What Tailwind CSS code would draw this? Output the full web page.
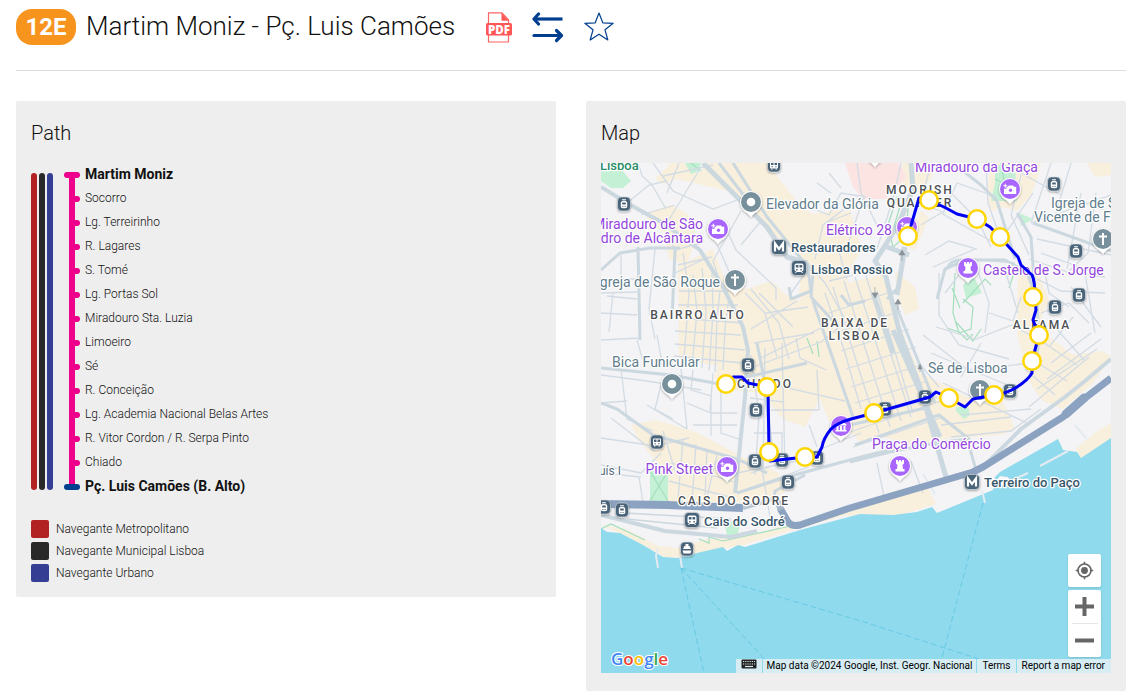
<!DOCTYPE html>
<html lang="en">
<head>
  <meta charset="UTF-8" />
  <meta name="viewport" content="width=device-width, initial-scale=1.0"/>
  <title>12E Martim Moniz - Pç. Luis Camões</title>
  <script src="https://cdn.jsdelivr.net/npm/@tailwindcss/browser@4"></script>
</head>
<body class="bg-white font-['Roboto',sans-serif] font-light text-[#111] pl-4 pr-1">

  <!-- Route header -->
  <header class="flex items-center pt-[9px] pb-[25px] border-b border-[#dcdcdc]">
    <span class="flex items-center justify-center w-[60px] h-9 rounded-2xl bg-[#f7941e] text-white text-2xl font-bold">12E</span>
    <h1 class="ml-[10px] text-[26px] leading-[34px] mb-[2px]">Martim Moniz - Pç. Luis Camões</h1>
    <a href="#pdf" aria-label="PDF" class="ml-[31px]">
      <svg class="w-[26px] h-[31px]" viewBox="0 0 26 31">
        <path d="M2.500 12V.8H16l6.500 7V12M2.500 23v7h20v-7" fill="#fff" stroke="#ff6464" stroke-width="1.200"/>
        <path d="M15.500 .8v8h7z" fill="#ff5757"/>
        <rect x="0" y="11" width="26" height="12.500" rx="1.500" fill="#ff5757"/>
        <text x="13" y="21.500" text-anchor="middle" font-family="Open Sans" font-weight="800" font-size="11.500" fill="#fff">PDF</text>
      </svg>
    </a>
    <a href="#reverse" aria-label="Reverse direction" class="ml-5">
      <svg class="w-8 h-[31px]" viewBox="0 0 32 31" fill="none" stroke="#003f8f" stroke-width="3.200" stroke-linecap="round" stroke-linejoin="round">
        <path d="M30.500 7H3" stroke-linecap="butt"/><path d="M6.500 2 2 7 6.500 12"/>
        <path d="M2 23.500h27"/><path d="M24.500 18.500l5 5-5 5"/>
      </svg>
    </a>
    <a href="#favourite" aria-label="Add to favourites" class="ml-5">
      <svg class="w-[30px] h-[30px]" viewBox="0 0 30 30" fill="none" stroke="#003f8f" stroke-width="1.200" stroke-linejoin="round">
        <path d="M15 1l3.800 9.800 10.400.5-8.200 6.500 2.800 10.200L15 22.200 6.200 28 9 17.800.8 11.300l10.400-.5z"/>
      </svg>
    </a>
  </header>

  <main class="grid grid-cols-2 gap-[30px] items-start mt-[30px]">

    <!-- Path -->
    <section class="bg-[#eee] rounded-xs p-[15px]">
      <h2 class="text-xl leading-[34px] mb-[13px]">Path</h2>
      <div class="flex">
        <div class="flex gap-[2px] mt-[10px] mb-[9px]">
          <span class="w-[6px] rounded-full bg-[#b22222]"></span>
          <span class="w-[6px] rounded-full bg-[#292929]"></span>
          <span class="w-[6px] rounded-full bg-[#343f94]"></span>
        </div>
        <div class="grid ml-[11px] w-4 mt-3 mb-3">
          <div class="col-start-1 row-start-1 w-[6px] ml-[5px] bg-[#ee008c]"></div>
          <div class="col-start-1 row-start-1 flex flex-col justify-between items-end -my-[3px]">
            <i class="w-4 h-[6px] rounded-full bg-[#ee008c]"></i>
            <i class="w-2 h-[6px] rounded-full bg-[#ee008c]"></i>
            <i class="w-2 h-[6px] rounded-full bg-[#ee008c]"></i>
            <i class="w-2 h-[6px] rounded-full bg-[#ee008c]"></i>
            <i class="w-2 h-[6px] rounded-full bg-[#ee008c]"></i>
            <i class="w-2 h-[6px] rounded-full bg-[#ee008c]"></i>
            <i class="w-2 h-[6px] rounded-full bg-[#ee008c]"></i>
            <i class="w-2 h-[6px] rounded-full bg-[#ee008c]"></i>
            <i class="w-2 h-[6px] rounded-full bg-[#ee008c]"></i>
            <i class="w-2 h-[6px] rounded-full bg-[#ee008c]"></i>
            <i class="w-2 h-[6px] rounded-full bg-[#ee008c]"></i>
            <i class="w-2 h-[6px] rounded-full bg-[#ee008c]"></i>
            <i class="w-2 h-[6px] rounded-full bg-[#ee008c]"></i>
            <i class="w-4 h-[6px] rounded-full bg-[#003f8f]"></i>
          </div>
        </div>
        <ol class="ml-[5px] text-xs leading-[22px]">
          <li class="h-6 text-sm leading-[22px] font-bold">Martim Moniz</li>
          <li class="h-6">Socorro</li>
          <li class="h-6">Lg. Terreirinho</li>
          <li class="h-6">R. Lagares</li>
          <li class="h-6">S. Tomé</li>
          <li class="h-6">Lg. Portas Sol</li>
          <li class="h-6">Miradouro Sta. Luzia</li>
          <li class="h-6">Limoeiro</li>
          <li class="h-6">Sé</li>
          <li class="h-6">R. Conceição</li>
          <li class="h-6">Lg. Academia Nacional Belas Artes</li>
          <li class="h-6">R. Vitor Cordon / R. Serpa Pinto</li>
          <li class="h-6">Chiado</li>
          <li class="h-6 text-sm leading-[22px] font-bold">Pç. Luis Camões (B. Alto)</li>
        </ol>
      </div>
      <ul class="flex flex-col gap-1 mt-[21px] text-xs leading-[18px]">
        <li class="flex gap-[7px]"><span class="size-[18px] rounded-xs bg-[#b22222]"></span>Navegante Metropolitano</li>
        <li class="flex gap-[7px]"><span class="size-[18px] rounded-xs bg-[#292929]"></span>Navegante Municipal Lisboa</li>
        <li class="flex gap-[7px]"><span class="size-[18px] rounded-xs bg-[#343f94]"></span>Navegante Urbano</li>
      </ul>
    </section>

    <!-- Map -->
    <section class="bg-[#eee] rounded-xs p-[15px] pb-[18px]">
      <h2 class="text-xl leading-[34px] mb-[13px]">Map</h2>
      <div class="relative aspect-square overflow-hidden">
        <svg class="w-full h-full" viewBox="0 0 510 510" font-family="Roboto, sans-serif">
          <defs>
            <filter id="shadow" x="-30%" y="-30%" width="160%" height="170%"><feDropShadow dx="0" dy="1" stdDeviation="1" flood-opacity=".35"/></filter>
            <g id="box" filter="url(#shadow)"><rect x="-6.500" y="-7" width="13" height="14" rx="4" fill="#4a6479" stroke="#dfe6ea" stroke-width=".6"/></g>
            <g id="tram"><use href="#box"/><path d="M-3.200-1.500Q-3-3.200 0-3.200T3.200-1.500V3Q3 4.200 0 4.200T-3.200 3zM-2-4.800h4v1h-4z" fill="#fff"/><path d="M-1.800-1.600h3.600v2h-3.600zM-1.600 2h1v1h-1zM.6 2h1v1h-1z" fill="#4a6479"/></g>
            <g id="bus"><use href="#box"/><rect x="-4" y="-3.500" width="8" height="7" rx="1" fill="#fff"/><path d="M-3-2.500h2.500V0H-3zM.5-2.500H3V0H.5zM-2.500 1.300h1.300v1h-1.300zM1.200 1.300h1.300v1H1.200z" fill="#4a6479"/><path d="M-3 3.500h1.500v1H-3zM1.500 3.500H3v1H1.500z" fill="#fff"/></g>
            <g id="train"><rect x="-7.500" y="-7.500" width="15" height="15" rx="4" fill="#4a6479" stroke="#dfe6ea" stroke-width=".6" filter="url(#shadow)"/><rect x="-4.500" y="-4.500" width="9" height="8" rx="2" fill="#fff"/><path d="M-3.200-3h2.700v2.500h-2.700zM.5-3h2.700v2.500H.5zM-2.800 1h1.400v1.400h-1.400zM1.400 1h1.400v1.400H1.400z" fill="#4a6479"/><path d="M-3.500 5l1-1.500h5l1 1.500" fill="none" stroke="#fff"/></g>
            <g id="metro"><rect x="-7.500" y="-7.500" width="15" height="15" rx="4" fill="#4a6479" stroke="#dfe6ea" stroke-width=".6" filter="url(#shadow)"/><path d="M-4 4.500V-3.500L0 2l4-5.500v8" fill="none" stroke="#fff" stroke-width="2.200"/></g>
            <path id="drop" d="M0 15.500C-2 11.500-6 10.500-8.500 7A11 11 0 1 1 8.500 7C6 10.500 2 11.500 0 15.500z" fill="#fff" filter="url(#shadow)"/>
            <g id="greypin"><use href="#drop"/><circle r="10" fill="#78909c"/></g>
            <g id="purplepin"><use href="#drop"/><circle r="10" fill="#a966ff"/></g>
            <g id="dot"><use href="#greypin"/><circle r="4.300" fill="#fff"/></g>
            <g id="cross"><use href="#greypin"/><path d="M0-6V6M-4-2.500h8" stroke="#fff" stroke-width="2" fill="none"/></g>
            <g id="camera"><use href="#purplepin"/><path d="M-1.200-3.500H3l1 1.200h2.200v7.300H-6V-.2h2.600V-2.300h1.200z" fill="#fff"/><circle cx=".5" cy="1.300" r="1.700" fill="#a966ff"/><path d="M-4.700-5.300v4M-6.700-3.300h4" stroke="#fff" stroke-width="1.100"/></g>
            <g id="castle"><use href="#purplepin"/><path d="M-4-6h2v1.500h1V-6h2v1.500h1V-6h2v3.500L2.500-1 3 3h1.500v2.500h-9V3H-3l.5-4L-4-2.500z" fill="#fff"/></g>
            <g id="museum"><use href="#purplepin"/><path d="M-5.500-1.500 0-5.500l5.500 4v1h-11zM-4.500 0h2v4h-2zM-1 0h2v4h-2zM2.500 0h2v4h-2zM-5.500 4h11v1.500h-11z" fill="#fff"/></g>
            <circle id="stop" r="8.700" fill="#fff" stroke="#ffd600" stroke-width="2.500"/>
          </defs>

          <rect width="510" height="510" fill="#f4f3f5"/>

          <!-- Built-up areas -->
          <g fill="#f8efdc">
            <path d="M54 16 70 0h22l4 12 12-12h58l34 44 22 13 27-10 12 40-18 28-40-15-12-20-20-8-40-43-55-13-15 5z"/>
            <path d="M45 50 70 42l18 10 8 20-10 30-18-6-4-26-16-10z"/>
            <path d="M77 103 112 86l14 36 20 4 25-8 14 14 20 8 14 20-3 26 16 34-14 16-14 28-22-8-22-26-25-3-22-12 4-12-39-7z"/>
            <path d="M205 52l33-5 14 19-6 50 10 40 10 5 22-24 40 95 18 43-30 7-86-20-20-46-16 0 14-26-10-60z"/>
            <path d="M236 122l45-10 35 96 50 26 35 2 13 30-14 6-60 4-30-8-50 12-28-30z"/>
            <path d="M301 0h35l-6 16-12 14-16-6zM320 48l8 7-14 32-12-6zM294 108l20 16 4 22-14 6-8-22z"/>
            <path d="M390 0h50l-2 10-8 22-14 16-14-4-12 4-4-20z"/>
            <path d="M417 106l18-3 13 35-12 26 36 28 30-4 8 6-18 26-30 26-20-8-12-16-8-30-6-20z"/>
            <path d="M30 262 55 257l40 12 50 27 33 14 5 20-35 8-85 3-14-20 10-18-20-24z"/>
            <path d="M249 345l48-18 28-6 10 20-40 12h-48z"/>
            <path d="M475 286l20-17 15-9v16l-30 20zM486 0h24v12l-16 2z"/>
            <path d="M0 362l10 4 34 17 20 11 18 1 20-6 40-7 50-15 68-19v-5l-62 17-50 12-46 5-25 8-20-2-32-17z"/>
          </g>
          <path d="M244 0h54l8 14-22 22-22 0-10-12z" fill="#fce4e3"/>

          <!-- Parks -->
          <g fill="#c4f0d5">
            <path d="M0 8l20-2 10 12-8 7-12 0-10-7zM84 0h16l-2 8-8 3zM49 308h18v30H49zM394 2h20l2 36h-26l4-18zM418 50l14 6-12 7zM362 122l10-10 9 18-16 5zM355 244h12l2 8-6 4-8-8zM124 362l8-5 7 6-3 10-10-1z"/>
          </g>
          <g fill="none" stroke="#a4dfbd" stroke-width="1.200">
            <path d="M49 308l18 30M67 308l-18 30M354 110l-2 40 6 20 12-4 2-22-10-8M362 140l22-24 6 6M351 125l8 20M354 158l18 20 8-12M296 34l-9 28 5 22 12-10 4-36zM300 40l-9 30M400 111l12 2-4 12M206 175l6 16M216 178l2 16M346 165l12 4 8 8 6-6M0 366l10-5 34 16M98 376l10 4v-6l14 4 76-17M90 0l10 8M394 16l20 10M400 0l6 36"/>
          </g>

          <!-- Local streets -->
          <g fill="none" stroke="#d3dce4" stroke-width="1.300">
            <path d="M37 0l4 13 10 9 14 24M52 0l20 28 40 18 24-9M62 13l50-11M78 0l-12 30M26 40 48 22l18-4M100 4 66 60M40 52l34-10M0 130l36-1M0 116h36M20 92v37M6 133l30 3M0 150l36 2M12 129l-4 40M54 86l-6 60 6 30M62 60l12 27M74 87l26-7M74 110l34-16M77 102l34-8M140 48l-28 50 7 20M125 65l10 22 40 38v12M116 81l20 46M160 58l-20 24"/>
            <path d="M82 90l6 40-5 65M92 112l4 36-5 55M101 105l4 43-4 57M111 110l1 40-4 58M119 127l-3 30-2 52M128 135l-4 30-2 42M78 128h50M77 142h60M76 155l66 5M74 168l66 4M74 181l70 6M73 193l68 7M144 130l20 20 12 44M150 126l28 34 10 36M158 130l34 34M165 150l42-6M150 166l46-28M153 180l60-10M160 195l60-30"/>
            <path d="M0 212l46 6 54 9M36 177l8 28M0 177l40-2M56 172l6 33M80 206l6 60M92 207l-2 20 20 6v40M112 210l-3 38M20 206l6 50 26 12M60 222l-6 24 18 10M86 240l24 10h26M92 262h44M86 266l-40-24M120 226v44l18 6M0 240l26-2M0 275l54 8 34-8M10 255l44 34M62 268l12 40M82 276l-5 60M95 281l-4 58M106 286l-2 48M116 292l-10 42M70 300l66 20M68 318l60 16M60 290l-20 20-40-8M0 310l40 4M38 314l4 26"/>
            <path d="M150 192l8 60-4 60M164 185l-2 130M181 180l3 126M170 247h48l-2-40M195 175l4 20 26 12M150 205l70-26 30-24M156 218l88 20M153 270h28v22M150 310l60-20 50-20M146 326l62-22M208 262l8 22M149 235l34 4M136 310l60-12M160 300l10 60"/>
            <path d="M208 44l20 8 12-22 25 4M216 20l14 10M228 10l12 15M224 60l26-10M236 82l10 34M206 100l18 20 20 36M214 96l8-34 24-18M228 118l24-6M206 108l-16 22M224 130l20 60 16 56M232 124l46 146M243 118l46 146M254 114l46 144M264 110l46 144M276 128l36 122M228 150l70-24M234 170l66-22M240 188l68-22M245 206l70-22M250 224l70-22M254 240l72-22M262 254l74-20M240 272l100-34M252 284l90-30"/>
            <path d="M256 0l4 30 20 40M262 36l-16 48M300 0l-8 36-16 50M330 0l-10 40 24 10M342 50l14-30 40 14M350 30l26 26 14 28M385 0l2 40 12 34M320 62l20-12 50 28M332 104l42-18M324 92l24-14 28 8M432 30l-30 44M450 0l-20 60M470 0l-18 60M430 60l80-28M436 76l74 16M440 90l60 22M420 10l40 22M480 30l-14 76M495 30l-8 60-21 20M510 50l-30-12M428 96l42 14 34 4M436 116l24 12 44 2M420 12l-10 40 18 40"/>
            <path d="M335 164l40 12 36-14 18 10M338 110v42l20 30 50 14M344 130l26-34 44 4M374 100l14 40-4 30M388 150l24 8 8-24M405 110l12 40M322 172l46 36 60-8M330 190l86 36M318 200l20 24M380 180l-20 34M342 220l84 40M360 252l70-6M340 262l70-8M350 274l60-6 30-22M444 110l4 20 20 14M440 150l28-10 20 20M448 184l24-30M450 200l40-30M446 216l54-40M436 226l60-40M428 244l60-50M470 124l30 40M484 110l10 60M454 164l30 34M440 178l36 24M430 196l36 22M424 206l30 26M276 300l8 38M310 298l12 32"/>
          </g>

          <!-- Secondary roads -->
          <g fill="none" stroke="#ccd8e0" stroke-width="3" stroke-linejoin="round">
            <path d="M0 24l26 16 36 20 37 27 23 37 20 40 5 23-3 47-10 96" stroke-width="4"/>
            <path d="M0 107l19-17 30-5h30M37 84l2 93M74 87l-3 70"/>
            <path d="M102 0l37 37 27 27 20 30 20 6" stroke-width="5"/>
            <path d="M132 0l34 54 36 44M118 0l26 34"/>
            <path d="M0 205l70 7 54 10 22-8 60-14M156 180l7 36 8 74M0 240l16 6 36 26 84 24 30 14"/>
            <path d="M188 124l2 12 20-8-4-28 6 10-2 24 24 26M212 138l40 116M240 132l8 10 16-4"/>
            <path d="M310 0l2 26-14 34-16 26-8 12 11 16 14 57 20 53 26 90M304 84l-6 36-2 12M292 167l47 107M272 130l20 60M308 92l-22-8" stroke-width="5"/>
            <path d="M302 84l-4 40-12 12M294 140l40 100M358 100l-14 6-8 30M346 105q4-8 14-8h44l22 12 10 28 2 40-4 28"/>
            <path d="M352 0l28 22 16 16 18 58M416 50l14 24 4 56M432 60l78 28M249 262l80-18M254 282l84-30 30 24-36 4M249 299l40-10 50-10h28l8 28M204 312l-30 16-2 14M136 330l50-16 74-20 40-10"/>
            <path d="M510 196l-26 22-20 16-44 32-34 34M0 352l64 16 66 6 26-6" stroke-width="4"/>
            <path d="M26 344h118M24 350l106 6M26 356l90 9" stroke-width="1.500"/>
          </g>

          <!-- River -->
          <path d="M0 365l6 4 13 1 23 12 20 12 14 1 20-5 26-6 4 4 11-6 7 2 55-17 60-16 33 1 24-3 15-5 5 6 56-23 2-13 5-5 58-33 5 11 14 2 4 6 30-20v235H0z" fill="#8fdaed"/>
          <path d="M396 324l31-14M439 303l28-15M57 385l-2 8 2 12M79 393l2 12M381 327l3 13M474 262l12 14M322 311l12 20" stroke="#e3ebf1" stroke-width="2" fill="none"/>
          <path d="M389 325l10-12 8 1 3 6z" fill="#f4f3f5"/>
          <g fill="none" stroke="#68cae4" stroke-width="1" stroke-dasharray="6 3">
            <path d="M80 405l23 105M80 405l88 96M80 405l180 53 118 38M382 340l-43 162"/>
          </g>

          <!-- Highway -->
          <g fill="none" stroke="#8ba3c1" stroke-width="7" stroke-linejoin="round">
            <path d="M510 215l-31 24-17 15-80 50-10 5-123 36-50 17q-8 2-12-3l-8-14"/>
            <path d="M0 341l66 1 76 3" stroke-width="8"/>
            <path d="M142 345l34-10" stroke="#b9c8d6" stroke-width="4"/>
            <path d="M180 347l-5-12" stroke="#a5b6c9" stroke-width="6"/>
            <path d="M483 235l-18 16" stroke-width="9" stroke-linecap="round"/>
          </g>
          <path d="M301 98v-8M301 87l-3 5h6zM274 124v8M274 135l-3-5h6zM297 147v-8M297 136l-3 5h6zM319 209v-4M319 201l-2 5h4z" fill="#8b9298" stroke="#8b9298" stroke-width=".6"/>

          <!-- Points of interest -->
          <use href="#tram" x="23" y="41"/><use href="#bus" x="173" y="2"/><use href="#tram" x="453" y="21"/>
          <use href="#tram" x="475" y="88"/><use href="#tram" x="478" y="132"/><use href="#tram" x="454" y="144"/>
          <use href="#tram" x="147" y="202"/><use href="#tram" x="155" y="247"/><use href="#tram" x="154" y="298"/>
          <use href="#tram" x="181" y="297"/><use href="#tram" x="216" y="295"/><use href="#tram" x="187" y="319"/>
          <use href="#bus" x="56" y="279"/><use href="#tram" x="284" y="246"/><use href="#tram" x="324" y="234"/>
          <use href="#tram" x="409" y="228"/><use href="#tram" x="3" y="344"/><use href="#tram" x="21" y="347"/>
          <use href="#box" x="86" y="386"/>
          <path d="M82 386l1.500-3h1v-2h3v2h1l1.500 3zM81.500 387.500h9l-1 3h-7z" fill="#fff"/>
          <use href="#metro" x="178" y="84"/><use href="#metro" x="371" y="319"/>
          <use href="#train" x="198" y="105"/><use href="#train" x="91" y="357"/>
          <use href="#dot" x="150" y="39"/><use href="#dot" x="71" y="221"/><use href="#drop" x="274" y="-11"/>
          <use href="#cross" x="134" y="117"/><use href="#cross" x="502" y="76"/><use href="#cross" x="379" y="227"/>
          <use href="#camera" x="117" y="66"/><use href="#camera" x="409" y="26"/><use href="#camera" x="306" y="64"/><use href="#camera" x="126" y="304"/>
          <use href="#castle" x="367" y="105"/><use href="#castle" x="299" y="303"/><use href="#museum" x="240" y="263"/>

          <!-- Labels -->
          <g font-size="14" font-weight="400" stroke="#fff" stroke-width="2.500" stroke-linejoin="round" paint-order="stroke">
            <g fill="#5f7d8c">
              <text x="165" y="46">Elevador da Glória</text>
              <text x="119" y="124" text-anchor="end">Igreja de São Roque</text>
              <text x="11" y="204">Bica Funicular</text>
              <text x="327" y="210">Sé de Lisboa</text>
              <text x="450" y="45">Igreja de São</text>
              <text x="433" y="59">Vicente de Fora</text>
            </g>
            <g fill="#9345de">
              <text x="102" y="66" text-anchor="end">Miradouro de São</text>
              <text x="102" y="80" text-anchor="end">Pedro de Alcântara</text>
              <text x="314" y="9">Miradouro da Graça</text>
              <text x="291" y="72" text-anchor="end">Elétrico 28</text>
              <text x="382" y="112">Castelo de S. Jorge</text>
              <text x="271" y="286">Praça do Comércio</text>
              <text x="112" y="311" text-anchor="end">Pink Street</text>
            </g>
            <text x="-1" y="7" fill="#2b8d68" font-size="13" font-weight="500">Lisboa</text>
            <g fill="#38566b" font-size="13" font-weight="500">
              <text x="190" y="89">Restauradores</text>
              <text x="210" y="111">Lisboa Rossio</text>
              <text x="383" y="324">Terreiro do Paço</text>
              <text x="103" y="363">Cais do Sodré</text>
            </g>
            <text x="20" y="312" text-anchor="end" fill="#556b7b" font-size="12">Luís I</text>
            <g fill="#4c5055" font-size="12" font-weight="500" letter-spacing="2" text-anchor="middle">
              <text x="97" y="156">BAIRRO ALTO</text>
              <text x="254" y="164">BAIXA DE</text>
              <text x="254" y="177">LISBOA</text>
              <text x="319" y="31">MOORISH</text>
              <text x="319" y="44">QUARTER</text>
              <text x="441" y="166">ALFAMA</text>
              <text x="164" y="225">CHIADO</text>
              <text x="133" y="342">CAIS DO SODRE</text>
            </g>
          </g>

          <!-- Line 12E -->
          <path d="M307 73L318 35L328 37L345 45L356 51L376 56L389 64L399 74L417 94L420 102L431 112Q434 118 434 134L435 147L432 157L438 172L431 198V210Q427 217 416 224T393 232L372 236L364 244L348 235L335 229L329 234L273 250L250 256Q236 260 230 266Q222 276 221 284L216 294L204 294L169 298L168 289L167 224L147 220L141 214H132L125 221" fill="none" stroke="#0000f5" stroke-width="3" stroke-linejoin="round"/>
          <use href="#stop" x="307" y="73"/><use href="#stop" x="328" y="37"/><use href="#stop" x="376" y="56"/>
          <use href="#stop" x="399" y="74"/><use href="#stop" x="432" y="134"/><use href="#stop" x="438" y="172"/>
          <use href="#stop" x="431" y="198"/><use href="#stop" x="393" y="232"/><use href="#stop" x="348" y="235"/>
          <use href="#stop" x="273" y="250"/><use href="#stop" x="204" y="294"/><use href="#stop" x="168" y="289"/>
          <use href="#stop" x="166" y="224"/><use href="#stop" x="125" y="221"/>

          <text x="10" y="502" font-family="Open Sans" font-size="17" font-weight="600" stroke="#fff" stroke-width="2" paint-order="stroke"><tspan fill="#4285f4">G</tspan><tspan fill="#ea4335">o</tspan><tspan fill="#fbbc04">o</tspan><tspan fill="#4285f4">g</tspan><tspan fill="#34a853">l</tspan><tspan fill="#ea4335">e</tspan></text>
        </svg>

        <!-- Map controls -->
        <div class="absolute right-[10px] bottom-4 flex flex-col gap-[3px]">
          <button type="button" aria-label="My location" class="flex items-center justify-center size-[33px] rounded-xs bg-white shadow">
            <svg class="size-[19px]" viewBox="0 0 20 20" fill="none" stroke="#666" stroke-width="1.700">
              <circle cx="10" cy="10" r="6.800"/><circle cx="10" cy="10" r="3.600" fill="#666" stroke="none"/>
              <path d="M10 .8v3M10 16.200v3M.8 10h3M16.200 10h3"/>
            </svg>
          </button>
          <div class="flex flex-col items-center w-[33px] rounded-xs bg-white shadow">
            <button type="button" aria-label="Zoom in" class="flex items-center justify-center w-full h-[33px]">
              <svg class="size-[19px]" viewBox="0 0 19 19" stroke="#666" stroke-width="4"><path d="M9.500 0v19M0 9.500h19"/></svg>
            </button>
            <span class="w-[26px] h-px bg-[#e6e6e6]"></span>
            <button type="button" aria-label="Zoom out" class="flex items-center justify-center w-full h-[33px]">
              <svg class="size-[19px]" viewBox="0 0 19 19" stroke="#666" stroke-width="4"><path d="M0 9.500h19"/></svg>
            </button>
          </div>
        </div>

        <!-- Attribution -->
        <div class="absolute right-0 bottom-0 flex gap-px h-[14px] text-[10px] leading-[14px] font-normal text-black whitespace-nowrap">
          <button type="button" aria-label="Keyboard shortcuts" class="flex items-start px-[5px] bg-[#f5f5f5]/70">
            <svg class="w-4 h-[10px]" viewBox="0 0 16 10"><rect x=".5" y=".5" width="15" height="9" rx="1" fill="#222"/><path d="M2 2.500h12M2 5h12" stroke="#dcebf0" stroke-width="1.200" stroke-dasharray="1.200 1"/><path d="M4 7.500h8" stroke="#dcebf0" stroke-width="1.200"/></svg>
          </button>
          <span class="px-1 bg-[#f5f5f5]/70">Map data ©2024 Google, Inst. Geogr. Nacional</span>
          <a href="#terms" class="px-[5px] bg-[#f5f5f5]/70">Terms</a>
          <a href="#report" class="pl-[5px] pr-[6px] bg-[#f5f5f5]/70">Report a map error</a>
        </div>
      </div>
    </section>

  </main>
</body>
</html>
